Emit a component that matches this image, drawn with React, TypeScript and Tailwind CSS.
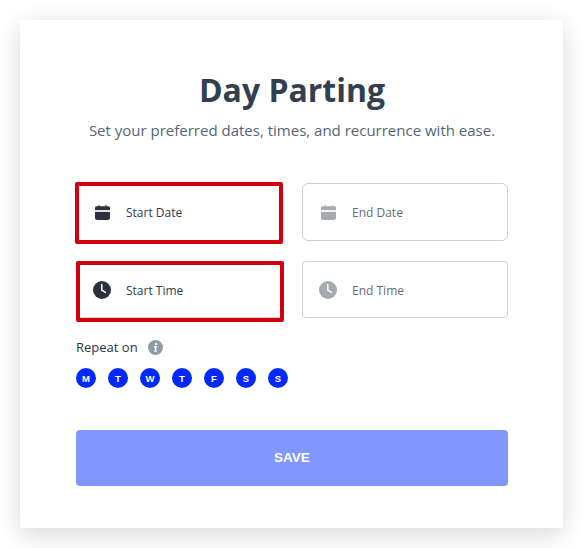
import { useState } from 'react';

type FieldProps = {
  label: string;
  icon: 'calendar' | 'clock';
  className: string;
  active?: boolean;
  highlight?: string;
};

const days = ['M', 'T', 'W', 'T', 'F', 'S', 'S'];

function CalendarIcon() {
  return (
    <svg className="w-[15px] h-[15px]" viewBox="0 0 15 15" fill="currentColor">
      <path d="M0 5V3.4A2 2 0 0 1 2 1.2H3.4V.6a.6.6 0 0 1 1.2 0v.6h5.8V.6a.6.6 0 0 1 1.2 0v.6H13A2 2 0 0 1 15 3.4V5z" />
      <path d="M0 6.9h15v5.6A2.5 2.5 0 0 1 12.5 15h-10A2.5 2.5 0 0 1 0 12.5z" />
      <path d="M0 5h15v1.9H0z" opacity=".15" />
    </svg>
  );
}

function ClockIcon() {
  return (
    <svg className="w-[18px] h-[18px]" viewBox="0 0 18 18" fill="none">
      <circle cx="9" cy="9" r="9" fill="currentColor" />
      <path d="M8.8 3.6v5.6l3.6 2.2" stroke="#fff" strokeWidth="1.5" strokeLinecap="round" strokeLinejoin="round" />
    </svg>
  );
}

function Field({ label, icon, className, active, highlight }: FieldProps) {
  return (
    <div className={`relative flex items-center border bg-white pl-4 ${className}`}>
      <span className={`flex w-[18px] shrink-0 justify-center ${active ? 'text-[#2a323d]' : 'text-[#a6aaaf]'}`}>
        {icon === 'calendar' ? <CalendarIcon /> : <ClockIcon />}
      </span>
      <span className={`ml-[15px] pt-0.5 text-[12px] leading-4 ${active ? 'text-[#2f3a49]' : 'text-[#626c79]'}`}>
        {label}
      </span>
      {highlight && <div className={`absolute rounded-[2px] border-4 border-[#d2000f] ${highlight}`} />}
    </div>
  );
}

export default function App() {
  const [selected, setSelected] = useState<boolean[]>(days.map(() => true));

  function toggle(i: number) {
    setSelected((prev) => prev.map((v, j) => (j === i ? !v : v)));
  }

  return (
    <div className="h-[548px] overflow-hidden bg-white p-5 font-['Open_Sans',sans-serif]">
      <main className="h-[508px] w-[543px] bg-white px-14 pt-[46px] shadow-[0_6px_24px_rgba(0,0,0,0.16)]">
        <h1 className="pl-px text-center text-[32px] font-bold leading-[48px] text-[#323f4f]">Day Parting</h1>
        <p className="mt-1 whitespace-nowrap pl-px text-center text-[15px] leading-6 text-[#566475]">
          Set your preferred dates, times, and recurrence with ease.
        </p>

        {/* Date and time fields */}
        <div className="mt-[41px] grid w-[432px] grid-cols-2 gap-5">
          <Field label="Start Date" icon="calendar" active className="h-[58px] rounded-[6px] border-[#cbd0dc]" highlight="-left-[2px] -top-[2px] h-[62px] w-[208px]" />
          <Field label="End Date" icon="calendar" className="h-[58px] rounded-[6px] border-[#cbd0dc]" />
          <Field label="Start Time" icon="clock" active className="h-[57px] rounded-[4px] border-[#cfd2d6]" highlight="-left-px -top-px h-[61px] w-[208px]" />
          <Field label="End Time" icon="clock" className="h-[57px] rounded-[4px] border-[#cfd2d6]" />
        </div>

        {/* Recurrence */}
        <div className="mt-5 flex h-5 items-center">
          <span className="text-[13px] text-[#2b333e]">Repeat on</span>
          <svg className="mb-px ml-[10px] h-[15px] w-[15px]" viewBox="0 0 15 15">
            <circle cx="7.5" cy="7.5" r="7.5" fill="#8d9bab" />
            <circle cx="8" cy="4.1" r="1.2" fill="#fff" />
            <path d="M6 6.7h2L7.1 11h1.7" fill="none" stroke="#fff" strokeWidth="1.5" />
          </svg>
        </div>
        <div className="mt-[10px] flex gap-3">
          {days.map((d, i) => (
            <button
              key={i}
              onClick={() => toggle(i)}
              className={`flex h-5 w-5 items-center justify-center rounded-full pt-px font-['Liberation_Sans',Arial,sans-serif] text-[9.5px] font-bold leading-5 ${
                selected[i] ? 'bg-[#0328ff] text-white' : 'bg-gray-200 text-gray-600'
              }`}
            >
              {d}
            </button>
          ))}
        </div>

        <button className="mt-[42px] h-14 w-[432px] rounded-[4px] bg-[#8197ff] font-['Liberation_Sans',Arial,sans-serif] text-[13.5px] font-bold text-white">
          SAVE
        </button>
      </main>
    </div>
  );
}
